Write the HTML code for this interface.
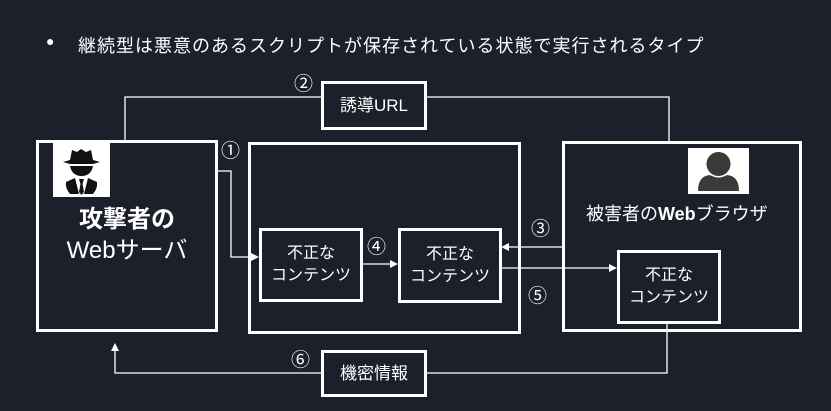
<!DOCTYPE html>
<html><head><meta charset="utf-8"><style>
body{margin:0;width:831px;height:411px;background:#1c202b;overflow:hidden;position:relative;font-family:"Liberation Sans","Noto Sans CJK JP",sans-serif;color:#fff}
.b{position:absolute;border:3px solid #fff;box-sizing:border-box;background:#1c202b}
.t{position:absolute;white-space:nowrap}
.c{display:flex;align-items:center;justify-content:center;text-align:center;font-size:16px;line-height:22px}
.n{font-size:19px}
</style></head><body>
<div class="t" style="left:46px;top:33px;font-size:14px">●</div>
<div class="t" style="left:78px;top:32px;font-size:18px;letter-spacing:1px">継続型は悪意のあるスクリプトが保存されている状態で実行されるタイプ</div>
<svg width="831" height="411" style="position:absolute;left:0;top:0">
<g stroke="#fff" stroke-width="1.3" fill="none">
<polyline points="125,140 125,97 669,97 669,141"/>
<polyline points="667,323 667,373 115,373 115,350"/>
<polyline points="217,171 231,171 231,257 252,257"/>
<line x1="362" y1="264" x2="391" y2="264"/>
<line x1="562" y1="247" x2="508" y2="247"/>
<line x1="501" y1="268" x2="610" y2="268"/>
</g>
<g fill="#fff">
<polygon points="259,257 251,253 251,261"/>
<polygon points="398,264 390,260 390,268"/>
<polygon points="501,247 509,243 509,251"/>
<polygon points="617,268 609,264 609,272"/>
<polygon points="115,343 111,351 119,351"/>
</g>
</svg>
<div class="b" style="left:36px;top:140px;width:182px;height:192px;background:none"></div>
<div style="position:absolute;left:53px;top:142px;width:57px;height:55px;background:#fff">
<svg width="57" height="55" viewBox="0 0 57 55"><g fill="#111">
<path d="M19 8 L24 10 L28 7 L33 10 L38 8 L40 18 L47 20 L40 22 L17 22 L10 20 L17 18Z"/>
<path d="M17 24 L40 24 Q38 34 28.5 34 Q19 34 17 24Z"/>
<path d="M13 40 L22 36 L26 52 L17 52 Q12 46 13 40Z"/>
<path d="M44 40 L35 36 L31 52 L40 52 Q45 46 44 40Z"/>
<path d="M26 37 L31 37 L29.5 42 L31 50 L28.5 53 L26 50 L27.5 42Z"/>
</g></svg></div>
<div class="t c" style="left:36px;top:204px;width:182px;font-size:24px;line-height:31px;font-weight:bold;flex-direction:column">攻撃者の<span style="font-weight:normal">Webサーバ</span></div>
<div class="b" style="left:248px;top:142px;width:273px;height:192px;background:none"></div>
<div class="b c" style="left:259px;top:228px;width:104px;height:74px">不正な<br>コンテンツ</div>
<div class="b c" style="left:398px;top:228px;width:104px;height:75px">不正な<br>コンテンツ</div>
<div class="b" style="left:562px;top:141px;width:240px;height:191px;background:none"></div>
<div style="position:absolute;left:688px;top:148px;width:61px;height:46px;background:#fff">
<svg width="61" height="46"><g fill="#3a3a38"><circle cx="30.5" cy="16" r="12"/><path d="M10 43 Q10 28 22 27 Q30.5 32 39 27 Q51 28 51 43Z"/></g></svg></div>
<div class="t" style="left:586px;top:200px;font-size:18px">被害者の<b>Web</b>ブラウザ</div>
<div class="b c" style="left:617px;top:250px;width:104px;height:74px">不正な<br>コンテンツ</div>
<div class="b c" style="left:321px;top:81px;width:106px;height:49px;font-size:17px">誘導URL</div>
<div class="b c" style="left:321px;top:350px;width:106px;height:47px;font-size:17px">機密情報</div>
<div class="t n" style="left:294px;top:69px">②</div>
<div class="t n" style="left:221px;top:136px">①</div>
<div class="t n" style="left:367px;top:232px">④</div>
<div class="t n" style="left:531px;top:214px">③</div>
<div class="t n" style="left:528px;top:281px">⑤</div>
<div class="t n" style="left:291px;top:345px">⑥</div>
</body></html>
